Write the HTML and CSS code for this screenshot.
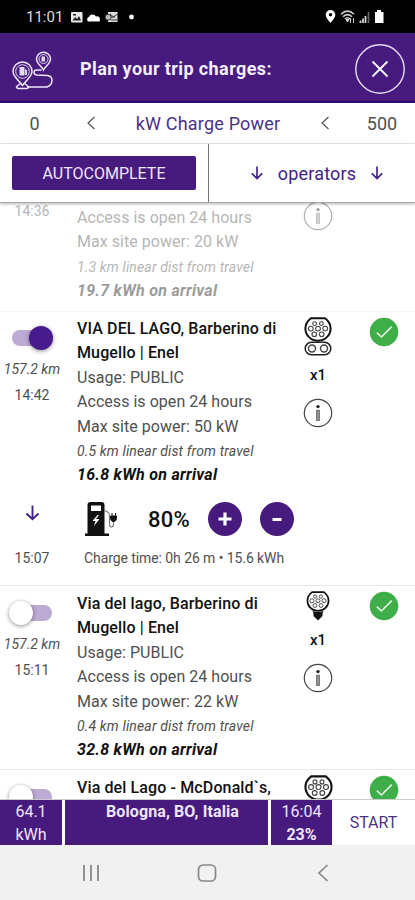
FILE: index.html
```
<!DOCTYPE html>
<html lang="en">
<head>
    <meta charset="UTF-8">
    <meta name="viewport" content="width=device-width, initial-scale=1.0">
    <title>Plan your trip charges</title>
    <link rel="stylesheet" href="styles.css">
</head>
<body>
    <!-- shared icons -->
    <svg class="defs" width="0" height="0">
        <symbol id="info" viewBox="0 0 30 30">
            <circle cx="15" cy="15" r="13.7" fill="none" stroke="#444" stroke-width="1.2"/>
            <circle cx="15" cy="8.6" r="1.7" fill="#222"/>
            <path d="M13.6 12.2h2.800v10.300h-2.800z" fill="#999" stroke="#555" stroke-width=".8"/>
        </symbol>
        <symbol id="check" viewBox="0 0 30 30">
            <circle cx="15" cy="15" r="14.3" fill="#3fae49"/>
            <path d="M7.8 15.6l4.6 4.4L22.8 9.6" fill="none" stroke="#e9f8ea" stroke-width="1.5"/>
        </symbol>
        <symbol id="plug" viewBox="0 0 28 25">
            <path d="M7 1.3H21Q26.6 5.5 26.6 11.5A12.6 12.2 0 0 1 1.4 11.5Q1.4 5.5 7 1.3z" fill="#fff" stroke="#111" stroke-width="2"/>
            <g fill="none" stroke="#444" stroke-width="1.1">
                <circle cx="10.6" cy="6.6" r="1.9"/><circle cx="17.4" cy="6.6" r="1.9"/>
                <circle cx="6.8" cy="11.6" r="2.4"/><circle cx="14" cy="11.6" r="2.4"/><circle cx="21.2" cy="11.6" r="2.4"/>
                <circle cx="10.3" cy="17.3" r="2.3"/><circle cx="17.7" cy="17.3" r="2.3"/>
            </g>
        </symbol>
        <symbol id="arrow" viewBox="0 0 16 18">
            <path d="M8 1.5V15M2 9.5L8 15.3L14 9.5" fill="none" stroke="currentColor" stroke-width="1.9"/>
        </symbol>
        <symbol id="chev" viewBox="0 0 10 14">
            <path d="M8.5 1L2 7L8.5 13" fill="none" stroke="currentColor" stroke-width="1.2"/>
        </symbol>
    </svg>

    <div class="statusbar">
        <span class="clock">11:01</span>
        <svg class="notif" width="66" height="14" viewBox="0 0 66 14">
            <rect x="1" y="2" width="11.5" height="10.5" rx="1" fill="#e8e8e8"/>
            <path d="M2.5 10.5L5.2 7L7 9L9 6L11 10.5z" fill="#222"/><path d="M3 4h3v1.5H3z" fill="#222"/>
            <path d="M18 11.5a2.6 2.6 0 0 1 .8-4.4A4 4 0 0 1 26 6.6a2.5 2.5 0 0 1 3.8 2.7q.8 2.2-1.3 2.2z" fill="#fff"/>
            <path d="M38 2h9.5v10H38z" fill="#ddd"/><path d="M40 4l3.5 3L47.5 4M40 7h5M41 10h6" stroke="#333" fill="none"/>
            <circle cx="38.2" cy="7.2" r="3" fill="#bbb" stroke="#333"/>
            <circle cx="61.5" cy="7" r="2.4" fill="#fff"/>
        </svg>
        <svg class="system" width="62" height="16" viewBox="0 0 62 16">
            <path d="M5.500 1a4.800 4.800 0 0 1 4.800 4.800C10.300 9 5.500 14 5.500 14S.7 9 .7 5.800A4.800 4.800 0 0 1 5.500 1z" fill="#fff"/>
            <circle cx="5.500" cy="5.700" r="1.700" fill="#000"/>
            <g fill="none" stroke="#ccc" stroke-width="1.500"><path d="M16 5.200Q22.500-1 29 5.200"/><path d="M18 7.700Q22.500 3.500 27 7.700"/><path d="M20 10Q22.500 7.500 25 10"/></g>
            <path d="M21 10.500h3l-1.500 2.500zM25.500 9v5M28.500 9v5" fill="#ccc" stroke="#ccc"/>
            <path d="M35.500 14v-2.500M38 14v-4.500M40.500 14V7" stroke="#ddd" stroke-width="1.700"/><path d="M43.500 14V3" stroke="#666" stroke-width="1.700"/>
            <path d="M50 3h2V1h4v2h2.500v11H50z" fill="#fff"/>
        </svg>
    </div>

    <header class="header">
        <svg class="route" width="42" height="42" viewBox="0 0 42 42">
            <g fill="none" stroke="#eee6fb" stroke-width="1.500">
                <path d="M10.500 37.500C6.500 32 1 28.500 1 23.500a9.500 9.500 0 0 1 19 0C20 28.500 14.500 32 10.500 37.500z"/>
                <circle cx="10.500" cy="23.500" r="6.800" stroke-width=".9"/>
                <path d="M31.500 22C29.500 18 24.500 15.500 24.500 11a7 6.800 0 0 1 14 0C38.500 15.500 33.500 18 31.500 22z"/>
                <circle cx="31.500" cy="11" r="4.500" stroke-width=".9"/>
                <path d="M29.500 22H24.500q-2.500 0-2.500 2.300t2.500 2.700l11 .5q4.500.5 4.500 5t-5 6.500H15"/>
                <path d="M8.500 35.500L4.500 38.500q0 2 2 2h8q2 0 2-2L12.500 35.500"/>
            </g>
            <path d="M7.500 19h5v8.500h-5zM13 21l2 1v5h-2zM29.500 8.500h3.500v5h-3.500z" fill="#e2d9f2"/>
        </svg>
        <h1 class="title">Plan your trip charges:</h1>
        <svg class="close" width="52" height="52" viewBox="0 0 52 52">
            <circle cx="26" cy="26" r="24.200" fill="none" stroke="#e4dbf2" stroke-width="1.400"/>
            <path d="M18.500 18.500L33.500 33.500M33.500 18.500L18.500 33.500" stroke="#fff" stroke-width="1.800"/>
        </svg>
    </header>

    <div class="power">
        <span class="num">0</span>
        <svg class="chev" width="10" height="14"><use href="#chev"/></svg>
        <span class="label">kW Charge Power</span>
        <svg class="chev" width="10" height="14"><use href="#chev"/></svg>
        <span class="num">500</span>
    </div>

    <div class="actions">
        <div class="half"><button class="auto">AUTOCOMPLETE</button></div>
        <div class="half operators">
            <svg width="14" height="16"><use href="#arrow"/></svg>
            <span>operators</span>
            <svg width="14" height="16"><use href="#arrow"/></svg>
        </div>
    </div>

    <main class="list">
        <section class="station past">
            <div class="left">
                <span class="time">14:36</span>
            </div>
            <div class="info">
                <p>Access is open 24 hours</p>
                <p>Max site power: 20 kW</p>
                <p class="dist">1.3 km linear dist from travel</p>
                <p class="arrival">19.7 kWh on arrival</p>
            </div>
            <div class="plugs">
                <svg width="30" height="30"><use href="#info"/></svg>
            </div>
        </section>

        <section class="station">
            <div class="left">
                <span class="switch on"></span>
                <span class="km">157.2 km</span>
                <span class="time">14:42</span>
            </div>
            <div class="info">
                <p class="name">VIA DEL LAGO, Barberino di<br>Mugello | Enel</p>
                <p>Usage: PUBLIC</p>
                <p>Access is open 24 hours</p>
                <p>Max site power: 50 kW</p>
                <p class="dist">0.5 km linear dist from travel</p>
                <p class="arrival">16.8 kWh on arrival</p>
            </div>
            <div class="plugs">
                <svg width="28" height="39" viewBox="0 0 28 39">
                    <use href="#plug" width="28" height="25"/>
                    <rect x="1.200" y="25.300" width="25.600" height="12.400" rx="6.200" fill="#fff" stroke="#222" stroke-width="1.500"/>
                    <circle cx="8" cy="31.500" r="3.500" fill="none" stroke="#444" stroke-width="1.400"/>
                    <circle cx="20" cy="31.500" r="3.500" fill="none" stroke="#444" stroke-width="1.400"/>
                </svg>
                <span class="count">x1</span>
                <svg width="30" height="30"><use href="#info"/></svg>
            </div>
            <div class="state"><svg width="30" height="30"><use href="#check"/></svg></div>
        </section>

        <section class="charge">
            <div class="left">
                <svg class="down" width="17" height="18"><use href="#arrow"/></svg>
                <span class="time">15:07</span>
            </div>
            <div class="chargebody">
                <div class="controls">
                    <svg class="pump" width="34" height="36" viewBox="0 0 34 36">
                        <path d="M1 35v-2.500h2.500V4q0-3 3-3h11q3 0 3 3v28.500H25V35z" fill="#111"/>
                        <path d="M7 4.500h10v5.500H7z" fill="#fff"/>
                        <path d="M13.500 14l-5 6h3l-1.500 5 5.500-7h-3.500l3-4z" fill="#fff"/>
                        <path d="M20.500 9.500l3 1.500q2 1 2 4v8q0 3 2 3t2-3v-4" fill="none" stroke="#777" stroke-width="1.100"/>
                        <path d="M26.500 15h6q.5 5.500-3 5.500t-3-5.500zM28 12v3.500M31.500 12v3.500" fill="#111" stroke="#111"/>
                    </svg>
                    <span class="percent">80%</span>
                    <button class="round"><svg width="14" height="14"><path d="M7 .5v13M.5 7h13" stroke="#fff" stroke-width="3.200"/></svg></button>
                    <button class="round"><svg width="14" height="14"><path d="M2.500 7.500h9" stroke="#fff" stroke-width="3"/></svg></button>
                </div>
                <p class="chargetime">Charge time: 0h 26 m • 15.6 kWh</p>
            </div>
        </section>

        <section class="station">
            <div class="left">
                <span class="switch"></span>
                <span class="km">157.2 km</span>
                <span class="time">15:11</span>
            </div>
            <div class="info">
                <p class="name">Via del lago, Barberino di<br>Mugello | Enel</p>
                <p>Usage: PUBLIC</p>
                <p>Access is open 24 hours</p>
                <p>Max site power: 22 kW</p>
                <p class="dist">0.4 km linear dist from travel</p>
                <p class="arrival">32.8 kWh on arrival</p>
            </div>
            <div class="plugs">
                <svg width="24" height="30" viewBox="0 0 24 30">
                    <path d="M7.500 22.500h9v2.500L12 29.500 7.500 25z" fill="#111"/>
                    <use href="#plug" width="24" height="21"/>
                    <path d="M6.500 20q5.500 2 11 0l-1.500 3.500H8z" fill="#111"/>
                </svg>
                <span class="count">x1</span>
                <svg width="30" height="30"><use href="#info"/></svg>
            </div>
            <div class="state"><svg width="30" height="30"><use href="#check"/></svg></div>
        </section>

        <section class="station">
            <div class="left"><span class="switch"></span></div>
            <div class="info"><p class="name">Via del Lago - McDonald`s,</p></div>
            <div class="plugs"><svg width="29" height="26"><use href="#plug"/></svg></div>
            <div class="state"><svg width="30" height="30"><use href="#check"/></svg></div>
        </section>
    </main>

    <footer class="summary">
        <div class="cell energy">64.1<br>kWh</div>
        <div class="cell dest">Bologna, BO, Italia</div>
        <div class="cell eta">16:04<br><b>23%</b></div>
        <button class="start">START</button>
    </footer>

    <nav class="navbar">
        <svg width="18" height="18"><path d="M2 1v16M9 1v16M16 1v16" stroke="#888" stroke-width="1.800"/></svg>
        <svg width="20" height="18"><rect x="1.500" y="1" width="17" height="16" rx="4.500" fill="none" stroke="#888" stroke-width="1.700"/></svg>
        <svg width="12" height="18"><path d="M10.500 1L2 9L10.500 17" fill="none" stroke="#888" stroke-width="1.700"/></svg>
    </nav>
</body>
</html>
```
FILE: styles.css
```
* {
    margin: 0;
    padding: 0;
    box-sizing: border-box;
}

body {
    width: 415px;
    height: 900px;
    display: flex;
    flex-direction: column;
    overflow: hidden;
    background: #fff;
    color: #505050;
    font-family: Roboto, "Liberation Sans", sans-serif;
    font-size: 16px;
    white-space: nowrap;
}

svg {
    display: block;
    flex-shrink: 0;
}

button {
    border: none;
    font-family: inherit;
}

.defs {
    display: none;
}

/* phone status bar */
.statusbar {
    height: 33px;
    flex-shrink: 0;
    display: flex;
    align-items: center;
    padding: 0 28px 0 26px;
    background: #000;
    color: #ddd;
}

.clock {
    width: 44px;
    font-size: 15px;
}

.system {
    margin-left: auto;
}

/* header */
.header {
    height: 70px;
    flex-shrink: 0;
    display: flex;
    align-items: center;
    padding: 4px 9px 0 12px;
    background: #471b7e;
    border-bottom: 2px solid #2d0a70;
}

.title {
    flex: 1;
    margin-left: 26px;
    padding-bottom: 2px;
    color: #f4effb;
    font-size: 18px;
    font-weight: 700;
    letter-spacing: 0.4px;
}

.power {
    height: 41px;
    flex-shrink: 0;
    display: grid;
    grid-template-columns: 69px 44px 190px 44px 70px;
    align-items: center;
    justify-items: center;
    border-bottom: 1px solid #eee;
    font-size: 18px;
}

.power .label {
    color: #4a3385;
    letter-spacing: 0.2px;
}

.chev {
    color: #555;
}

.actions {
    position: relative;
    height: 59px;
    flex-shrink: 0;
    display: flex;
    background: #fff;
    border-bottom: 1px solid #aaa;
    box-shadow: 0 1px 3px rgba(0, 0, 0, 0.3);
    z-index: 1;
}

.half {
    width: 209px;
    padding: 12px;
    border-right: 1px solid #777;
}

.auto {
    width: 184px;
    height: 34px;
    background: #471b7e;
    border-radius: 2px;
    color: #eee6fa;
    font-size: 16px;
}

.operators {
    flex: 1;
    display: flex;
    align-items: center;
    justify-content: center;
    gap: 14px;
    padding-left: 22px;
    border: none;
    color: #3f2286;
    font-size: 18px;
    letter-spacing: 0.2px;
}

/* scrolled list of stations */
.list {
    flex: 1;
    min-height: 0;
    overflow: hidden;
}

.station {
    height: 184px;
    display: flex;
    border-top: 1px solid #e8e8e8;
    padding-top: 5px;
}

.station:nth-child(2) {
    border-color: #f4f4f4;
}

.station.past {
    height: 108px;
    padding-top: 0;
    border-top: none;
    opacity: 0.42;
}

.left {
    width: 65px;
    display: flex;
    flex-direction: column;
    align-items: center;
    padding-right: 1px;
    font-size: 14px;
}

.switch {
    position: relative;
    width: 40px;
    height: 16px;
    margin: 13px 0 14px;
    border-radius: 8px;
    background: #bdaad5;
}

.switch::after {
    content: "";
    position: absolute;
    top: -4px;
    left: -3px;
    width: 24px;
    height: 24px;
    border-radius: 50%;
    background: #fff;
    box-shadow: 0 1px 4px rgba(0, 0, 0, 0.45);
}

.switch.on::after {
    left: 17px;
    background: #471b8e;
}

.km {
    font-style: italic;
    line-height: 18px;
}

.time {
    margin-top: 8px;
    line-height: 18px;
}

.past .time {
    margin-top: -1px;
}

.info {
    width: 213px;
    padding-left: 12px;
    line-height: 24.400px;
}

.past .info {
    padding-top: 3px;
}

.past .plugs {
    margin-top: -2px;
}

.info p {
    letter-spacing: 0.04px;
}

.info .name {
    color: #111;
    font-weight: 500;
    letter-spacing: 0.12px;
}

.info .dist {
    font-size: 14px;
    font-style: italic;
    letter-spacing: 0.14px;
}

.info .arrival {
    color: #111;
    font-weight: 700;
    font-style: italic;
    letter-spacing: 0.28px;
}

.plugs {
    width: 80px;
    display: flex;
    flex-direction: column;
    align-items: center;
}

.count {
    margin: 9px 0 13px;
    color: #111;
    font-size: 15px;
    font-weight: 500;
    line-height: 20px;
}

.state {
    flex: 1;
    padding-left: 11px;
}

.charge ~ .station .left,
.charge ~ .station .info {
    padding-top: 1px;
}

/* charging stop */
.charge {
    height: 90px;
    display: flex;
}

.down {
    margin-top: 9px;
    color: #3f2286;
}

.charge .time {
    margin-top: 27px;
}

.chargebody {
    padding: 6px 0 0 19px;
}

.controls {
    display: flex;
    align-items: center;
}

.percent {
    width: 60px;
    margin-left: 30px;
    color: #111;
    font-size: 22px;
    font-weight: 500;
    letter-spacing: 0.3px;
}

.round {
    width: 34px;
    height: 34px;
    display: flex;
    align-items: center;
    justify-content: center;
    margin-right: 18px;
    border-radius: 50%;
    background: #471b7e;
}

.chargetime {
    margin-top: 12px;
    font-size: 14px;
    letter-spacing: -0.08px;
    line-height: 18px;
}

/* trip summary */
.summary {
    height: 46px;
    flex-shrink: 0;
    display: flex;
    gap: 3px;
    border-top: 1px solid #ccc;
}

.cell {
    background: #471b7e;
    color: #eee6fa;
    text-align: center;
    line-height: 23px;
}

.energy {
    width: 62px;
}

.dest {
    width: 203px;
    padding-left: 12px;
    font-weight: 700;
    letter-spacing: 0.1px;
}

.eta {
    width: 61px;
}

.start {
    flex: 1;
    padding-right: 3px;
    background: #fff;
    color: #4a3385;
    font-size: 16px;
}

.navbar {
    height: 55px;
    flex-shrink: 0;
    display: flex;
    align-items: center;
    padding-left: 82px;
    gap: 97px;
    background: #f1f1f1;
}

.navbar svg:last-child {
    margin-left: 3px;
}
```
